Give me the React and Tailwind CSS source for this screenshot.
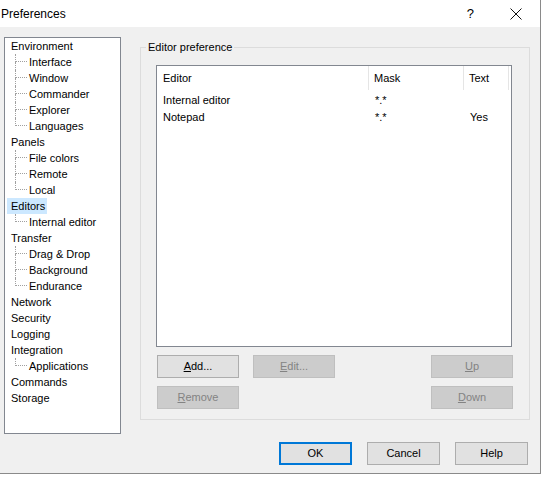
import React from 'react';

const tree = [
  { label: 'Environment', children: ['Interface', 'Window', 'Commander', 'Explorer', 'Languages'] },
  { label: 'Panels', children: ['File colors', 'Remote', 'Local'] },
  { label: 'Editors', children: ['Internal editor'], selected: true },
  { label: 'Transfer', children: ['Drag & Drop', 'Background', 'Endurance'] },
  { label: 'Network' },
  { label: 'Security' },
  { label: 'Logging' },
  { label: 'Integration', children: ['Applications'] },
  { label: 'Commands' },
  { label: 'Storage' },
];

function ChildRow({ label, last }) {
  return (
    <div className="flex h-4 items-stretch">
      <div className="w-[10px] shrink-0" />
      <div className="flex w-[12px] shrink-0 flex-col">
        <div className="h-[8px] border-b border-l border-dotted border-[#a0a0a0]" />
        <div className={`flex-1 ${last ? '' : 'border-l border-dotted border-[#a0a0a0]'}`} />
      </div>
      <span className="ml-[2px] leading-4">{label}</span>
    </div>
  );
}

function TreeItem({ item }) {
  return (
    <div>
      <div className="flex h-4">
        <span
          className={`ml-[2px] pl-[4px] pr-[2px] leading-4 ${item.selected ? 'bg-[#cce8ff]' : ''}`}
        >
          {item.label}
        </span>
      </div>
      {item.children &&
        item.children.map((c, i) => (
          <ChildRow key={c} label={c} last={i === item.children.length - 1} />
        ))}
    </div>
  );
}

function Btn({ children, disabled, def, className = '' }) {
  return (
    <div
      className={`flex h-[23px] items-center justify-center border ${
        disabled
          ? 'border-[#bfbfbf] bg-[#cccccc] text-[#838383]'
          : def
          ? 'border-[#0078d7] bg-[#e1e1e1] text-black shadow-[inset_0_0_0_1px_#0078d7]'
          : 'border-[#adadad] bg-[#e1e1e1] text-black'
      } ${className}`}
    >
      {children}
    </div>
  );
}

export default function App() {
  return (
    <div
      className="relative flex h-[478px] w-[543px] flex-col overflow-hidden bg-white text-[11px] text-black"
      style={{ fontFamily: '"Liberation Sans", Arial, sans-serif' }}
    >
      <div className="flex h-[474px] w-[541px] flex-col border-r border-b border-[#8a8a8a] bg-[#f0f0f0]">
        {/* title bar */}
        <div className="flex h-[27px] shrink-0 items-center bg-white text-[12px]">
          <span className="ml-[1px]">Preferences</span>
          <span className="ml-auto mr-[36px] text-[13px]">?</span>
          <svg width="12" height="12" viewBox="0 0 12 12" className="mr-[18px]">
            <path d="M0.5 0.5 L11.5 11.5 M11.5 0.5 L0.5 11.5" stroke="#111" strokeWidth="1" fill="none" />
          </svg>
        </div>

        <div className="flex">
          {/* tree */}
          <div className="ml-[4px] mt-[10px] h-[397px] w-[117px] shrink-0 border border-[#828790] bg-white">
            {tree.map((t) => (
              <TreeItem key={t.label} item={t} />
            ))}
          </div>

          {/* group box */}
          <div className="ml-[19px] mt-[20px] flex h-[373px] w-[390px] flex-col border border-[#dcdcdc]">
            <div className="-mt-[7px] ml-[5px] w-fit bg-[#f0f0f0] px-[2px] leading-[13px]">Editor preference</div>
            <div className="ml-[15px] mt-[11px] flex h-[282px] w-[356px] flex-col border border-[#828790] bg-white">
              <div className="flex h-[24px] items-stretch">
                <div className="flex w-[212px] items-center border-r border-[#e5e5e5] pl-[6px] pt-[1px]">Editor</div>
                <div className="flex w-[95px] items-center border-r border-[#e5e5e5] pl-[5px] pt-[1px]">Mask</div>
                <div className="flex w-[45px] items-center border-r border-[#e5e5e5] pl-[5px] pt-[1px]">Text</div>
              </div>
              <div className="pt-[2px]">
                <div className="flex h-[17px] items-center">
                  <span className="w-[213px] pl-[6px]">Internal editor</span>
                  <span className="w-[95px] pl-[5px]">*.*</span>
                  <span className="pl-[5px]"></span>
                </div>
                <div className="flex h-[17px] items-center">
                  <span className="w-[213px] pl-[6px]">Notepad</span>
                  <span className="w-[95px] pl-[5px]">*.*</span>
                  <span className="pl-[5px]">Yes</span>
                </div>
              </div>
            </div>
            <div className="ml-[16px] mt-[8px] flex">
              <Btn className="w-[82px]">
                <span><u>A</u>dd...</span>
              </Btn>
              <Btn disabled className="ml-[14px] w-[82px]">
                <span><u>E</u>dit...</span>
              </Btn>
              <Btn disabled className="ml-[96px] w-[82px]">
                <span><u>U</u>p</span>
              </Btn>
            </div>
            <div className="ml-[16px] mt-[8px] flex">
              <Btn disabled className="w-[82px]">
                <span><u>R</u>emove</span>
              </Btn>
              <Btn disabled className="ml-[192px] w-[82px]">
                <span><u>D</u>own</span>
              </Btn>
            </div>
          </div>
        </div>

        {/* bottom buttons */}
        <div className="mt-[8px] flex">
          <Btn def className="ml-[279px] w-[73px]">OK</Btn>
          <Btn className="ml-[15px] w-[73px]">Cancel</Btn>
          <Btn className="ml-[15px] w-[73px]">Help</Btn>
        </div>
      </div>
    </div>
  );
}
